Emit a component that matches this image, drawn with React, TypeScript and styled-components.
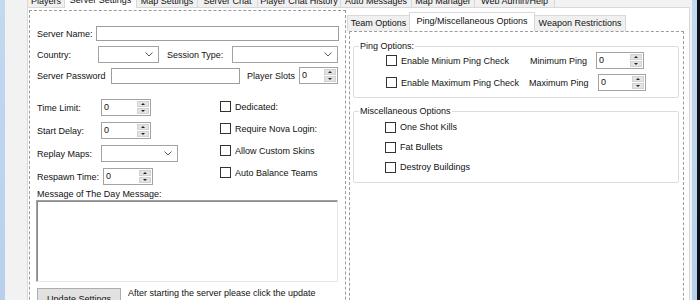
import styled, { createGlobalStyle } from 'styled-components';

const GlobalStyle = createGlobalStyle`
  html, body {
    margin: 0;
    padding: 0;
    background: #f0f0f0;
  }
  body {
    font-family: 'Liberation Sans', Arial, sans-serif;
    font-size: 9px;
    color: #111;
  }
`;

const outerTabs = [
  { label: 'Players', width: 38 },
  { label: 'Server Settings', width: 73, active: true },
  { label: 'Map Settings', width: 62 },
  { label: 'Server Chat', width: 61 },
  { label: 'Player Chat History', width: 84 },
  { label: 'Auto Messages', width: 72 },
  { label: 'Map Manager', width: 64 },
  { label: 'Web Admin/Help', width: 81 },
];

const innerTabs = [
  { label: 'Team Options', width: 63 },
  { label: 'Ping/Miscellaneous Options', width: 126, active: true },
  { label: 'Weapon Restrictions', width: 92 },
];

const serverChecks = ['Dedicated:', 'Require Nova Login:', 'Allow Custom Skins', 'Auto Balance Teams'];
const miscChecks = ['One Shot Kills', 'Fat Bullets', 'Destroy Buildings'];

function Chevron() {
  return (
    <svg width="8" height="5" viewBox="0 0 8 5">
      <polyline points="0.5,0.5 4,4 7.5,0.5" fill="none" stroke="#5a5a5a" strokeWidth="1" />
    </svg>
  );
}

function NumericUpDown({ width }: { width: number }) {
  return (
    <Numeric $width={width}>
      <NumericValue>0</NumericValue>
      <Spinner>
        <SpinButton>
          <ArrowUp />
        </SpinButton>
        <SpinButton>
          <ArrowDown />
        </SpinButton>
      </Spinner>
    </Numeric>
  );
}

function ComboBox({ width }: { width: number }) {
  return (
    <Combo $width={width}>
      <Chevron />
    </Combo>
  );
}

export default function App() {
  return (
    <>
      <GlobalStyle />
      <Screen>
        <FrameEdge />
        <Form>
          <TabStrip>
            {outerTabs.map((tab) => (
              <Tab key={tab.label} $width={tab.width} $active={!!tab.active}>
                {tab.label}
              </Tab>
            ))}
          </TabStrip>
          <TabPage>
            <LeftPanel>
              <TopFields>
                <FieldRow>
                  <Label $width={59}>Server Name:</Label>
                  <TextBox $width={243} $height={15} readOnly />
                </FieldRow>
                <FieldRow>
                  <Label $width={61}>Country:</Label>
                  <ComboBox width={61} />
                  <Label $width={65} $gap={8}>
                    Session Type:
                  </Label>
                  <ComboBox width={106} />
                </FieldRow>
                <FieldRow>
                  <Label $width={74}>Server Password</Label>
                  <TextBox $width={129} $height={16} readOnly />
                  <Label $width={52} $gap={7}>
                    Player Slots
                  </Label>
                  <NumericUpDown width={39} />
                </FieldRow>
              </TopFields>

              <LowerSection>
                <LeftColumn>
                  <FieldRow>
                    <Label $width={64}>Time Limit:</Label>
                    <NumericUpDown width={50} />
                  </FieldRow>
                  <FieldRow>
                    <Label $width={64}>Start Delay:</Label>
                    <NumericUpDown width={50} />
                  </FieldRow>
                  <FieldRow>
                    <Label $width={64}>Replay Maps:</Label>
                    <ComboBox width={77} />
                  </FieldRow>
                  <FieldRow>
                    <Label $width={66}>Respawn Time:</Label>
                    <NumericUpDown width={50} />
                  </FieldRow>
                </LeftColumn>
                <CheckColumn>
                  {serverChecks.map((text) => (
                    <CheckRow key={text} $height={17}>
                      <CheckBox type="checkbox" readOnly />
                      <CheckText>{text}</CheckText>
                    </CheckRow>
                  ))}
                </CheckColumn>
              </LowerSection>

              <MotdLabel>Message of The Day Message:</MotdLabel>
              <MotdBox readOnly value="" />

              <ButtonRow>
                <Button>Update Settings</Button>
                <HelpText>
                  After starting the server please click the update
                  <br />
                  settings button so that your settings are applied.
                </HelpText>
              </ButtonRow>
            </LeftPanel>

            <RightPanel>
              <InnerTabStrip>
                {innerTabs.map((tab) => (
                  <InnerTab key={tab.label} $width={tab.width} $active={!!tab.active}>
                    {tab.label}
                  </InnerTab>
                ))}
              </InnerTabStrip>
              <InnerPage>
                <GroupBox $top={9} $padding="1px 0 6px 5px">
                  <GroupTitle>Ping Options:</GroupTitle>
                  <PingRows>
                    <PingRow>
                      <CheckBox type="checkbox" readOnly $indent={27} />
                      <CheckText $width={129}>Enable Minium Ping Check</CheckText>
                      <Label $width={66}>Minimum Ping</Label>
                      <NumericUpDown width={48} />
                    </PingRow>
                    <PingRow>
                      <CheckBox type="checkbox" readOnly $indent={27} />
                      <CheckText $width={128}>Enable Maximum Ping Check</CheckText>
                      <Label $width={69}>Maximum Ping</Label>
                      <NumericUpDown width={48} />
                    </PingRow>
                  </PingRows>
                </GroupBox>
                <GroupBox $top={8} $padding="4px 0 8px 5px">
                  <GroupTitle>Miscellaneous Options</GroupTitle>
                  <MiscRows>
                    {miscChecks.map((text) => (
                      <CheckRow key={text} $height={14}>
                        <CheckBox type="checkbox" readOnly $indent={26} />
                        <CheckText>{text}</CheckText>
                      </CheckRow>
                    ))}
                  </MiscRows>
                </GroupBox>
              </InnerPage>
            </RightPanel>
          </TabPage>
        </Form>
        <FrameEdge />
        <DesktopEdge />
      </Screen>
    </>
  );
}

const Screen = styled.div`
  display: flex;
  width: 700px;
  height: 300px;
  overflow: hidden;
`;

const FrameEdge = styled.div`
  width: 5px;
  flex-shrink: 0;
  background: linear-gradient(180deg, #c3d8f1 0%, #b8d0ec 100%);
`;

const DesktopEdge = styled.div`
  width: 3px;
  flex-shrink: 0;
  background: #0f1318;
`;

const Form = styled.div`
  flex: 1;
  display: flex;
  flex-direction: column;
  padding: 0 2px 0 22px;
  background: #f2f2f2;
  min-width: 0;
`;

const TabStrip = styled.div`
  display: flex;
  align-items: flex-end;
  height: 14px;
  margin-top: -7px;
  padding-left: 1px;
  flex-shrink: 0;
`;

const Tab = styled.div<{ $width: number; $active: boolean }>`
  box-sizing: border-box;
  width: ${(p) => p.$width}px;
  height: ${(p) => (p.$active ? 17 : 14)}px;
  margin-bottom: ${(p) => (p.$active ? -1 : 0)}px;
  position: relative;
  z-index: ${(p) => (p.$active ? 1 : 0)};
  border: 1px solid #d9d9d9;
  border-bottom: none;
  margin-left: -1px;
  background: ${(p) => (p.$active ? '#ffffff' : '#f0f0f0')};
  text-align: center;
  line-height: ${(p) => (p.$active ? 17 : 14)}px;
  white-space: nowrap;
  overflow: hidden;
`;

const TabPage = styled.div`
  flex: 1;
  display: flex;
  align-items: flex-start;
  gap: 1px;
  padding: 2px 0 0 1px;
  background: #ffffff;
  border: 1px solid #d9d9d9;
  border-bottom: none;
  min-height: 0;
  overflow: hidden;
`;

const LeftPanel = styled.div`
  box-sizing: border-box;
  width: 317px;
  height: 340px;
  flex-shrink: 0;
  border: 1px dashed #9c9c9c;
  padding-left: 7px;
  display: flex;
  flex-direction: column;
`;

const TopFields = styled.div`
  display: flex;
  flex-direction: column;
  gap: 4px;
  padding-top: 14px;
`;

const FieldRow = styled.div`
  display: flex;
  align-items: center;
  height: 17px;
`;

const Label = styled.span<{ $width: number; $gap?: number }>`
  width: ${(p) => p.$width}px;
  margin-left: ${(p) => p.$gap ?? 0}px;
  flex-shrink: 0;
  white-space: nowrap;
  line-height: 10px;
`;

const TextBox = styled.input<{ $width: number; $height: number }>`
  box-sizing: border-box;
  width: ${(p) => p.$width}px;
  height: ${(p) => p.$height}px;
  margin: 0;
  padding: 0 2px;
  border: 1px solid #9d9d9d;
  background: #ffffff;
  font: inherit;
  outline: none;
`;

const Combo = styled.div<{ $width: number }>`
  box-sizing: border-box;
  width: ${(p) => p.$width}px;
  height: 17px;
  flex-shrink: 0;
  display: flex;
  align-items: center;
  justify-content: flex-end;
  padding-right: 5px;
  border: 1px solid #a3a3a3;
  background: #ffffff;
`;

const Numeric = styled.div<{ $width: number }>`
  box-sizing: border-box;
  width: ${(p) => p.$width}px;
  height: 17px;
  flex-shrink: 0;
  display: flex;
  border: 1px solid #a3a3a3;
  background: #ffffff;
`;

const NumericValue = styled.span`
  flex: 1;
  padding-left: 2px;
  line-height: 15px;
`;

const Spinner = styled.div`
  width: 12px;
  display: flex;
  flex-direction: column;
  gap: 1px;
  padding: 1px 1px 1px 0;
`;

const SpinButton = styled.div`
  flex: 1;
  display: flex;
  align-items: center;
  justify-content: center;
  background: #e3e3e3;
  border: 1px solid #d2d2d2;
  box-sizing: border-box;
`;

const ArrowUp = styled.span`
  width: 0;
  height: 0;
  border-left: 2px solid transparent;
  border-right: 2px solid transparent;
  border-bottom: 2px solid #222;
`;

const ArrowDown = styled.span`
  width: 0;
  height: 0;
  border-left: 2px solid transparent;
  border-right: 2px solid transparent;
  border-top: 2px solid #222;
`;

const LowerSection = styled.div`
  display: flex;
  margin-top: 14px;
`;

const LeftColumn = styled.div`
  width: 183px;
  flex-shrink: 0;
  display: flex;
  flex-direction: column;
  gap: 6px;
  padding-top: 1px;
`;

const CheckColumn = styled.div`
  display: flex;
  flex-direction: column;
  gap: 5px;
`;

const CheckRow = styled.div<{ $height: number }>`
  display: flex;
  align-items: center;
  height: ${(p) => p.$height}px;
`;

const CheckBox = styled.input<{ $indent?: number }>`
  appearance: none;
  box-sizing: border-box;
  width: 11px;
  height: 11px;
  margin: 0 0 0 ${(p) => p.$indent ?? 0}px;
  flex-shrink: 0;
  border: 1px solid #333333;
  border-radius: 0;
  background: #ffffff;
`;

const CheckText = styled.span<{ $width?: number }>`
  margin-left: 4px;
  width: ${(p) => (p.$width ? `${p.$width}px` : 'auto')};
  flex-shrink: 0;
  white-space: nowrap;
  line-height: 10px;
`;

const MotdLabel = styled.div`
  margin-top: 4px;
  line-height: 10px;
`;

const MotdBox = styled.textarea`
  box-sizing: border-box;
  width: 302px;
  height: 82px;
  margin: 1px 0 0 -1px;
  padding: 0;
  resize: none;
  outline: none;
  border: 1px solid;
  border-color: #a0a0a0 #e6e6e6 #e6e6e6 #a0a0a0;
  box-shadow: inset 1px 1px 0 #8a8a8a;
  background: #ffffff;
  font: inherit;
`;

const ButtonRow = styled.div`
  display: flex;
  align-items: flex-start;
  gap: 7px;
  margin-top: 6px;
`;

const Button = styled.button`
  box-sizing: border-box;
  width: 84px;
  height: 21px;
  flex-shrink: 0;
  padding: 0;
  border: 1px solid #adadad;
  background: #e1e1e1;
  font: inherit;
  color: #111;
`;

const HelpText = styled.div`
  line-height: 11px;
  white-space: nowrap;
`;

const RightPanel = styled.div`
  width: 337px;
  flex-shrink: 0;
  padding-top: 2px;
  display: flex;
  flex-direction: column;
`;

const InnerTabStrip = styled.div`
  display: flex;
  align-items: flex-end;
  height: 19px;
`;

const InnerTab = styled.div<{ $width: number; $active: boolean }>`
  box-sizing: border-box;
  width: ${(p) => p.$width}px;
  height: ${(p) => (p.$active ? 19 : 16)}px;
  margin-left: -1px;
  border: 1px solid #d9d9d9;
  border-bottom: none;
  background: ${(p) => (p.$active ? '#ffffff' : '#f0f0f0')};
  text-align: center;
  line-height: ${(p) => (p.$active ? 17 : 15)}px;
  white-space: nowrap;
  &:first-child {
    margin-left: 0;
  }
`;

const InnerPage = styled.div`
  box-sizing: border-box;
  width: 335px;
  height: 300px;
  flex-shrink: 0;
  margin-left: 2px;
  padding-left: 3px;
  border: 1px dashed #9c9c9c;
  display: flex;
  flex-direction: column;
`;

const GroupBox = styled.fieldset<{ $top: number; $padding: string }>`
  box-sizing: border-box;
  width: 326px;
  min-width: 0;
  margin: ${(p) => p.$top}px 0 0 0;
  padding: ${(p) => p.$padding};
  border: 1px solid #dcdcdc;
  border-radius: 2px;
`;

const GroupTitle = styled.legend`
  padding: 0 1px;
  line-height: 10px;
  font-size: 9px;
`;

const PingRows = styled.div`
  display: flex;
  flex-direction: column;
  gap: 5px;
`;

const PingRow = styled.div`
  display: flex;
  align-items: center;
  height: 17px;
`;

const MiscRows = styled.div`
  display: flex;
  flex-direction: column;
  gap: 6px;
`;
